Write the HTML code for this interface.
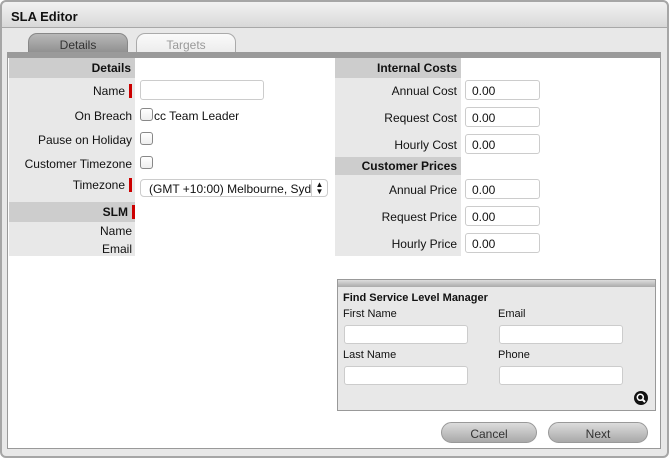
<!DOCTYPE html>
<html><head><style>
*{margin:0;padding:0;box-sizing:border-box}
body{width:669px;height:458px;background:#fff;font-family:"Liberation Sans",Arial,sans-serif;font-size:12px;color:#111;position:relative;overflow:hidden}
.win{position:absolute;left:0;top:0;width:669px;height:458px;border:2px solid #a6a6a6;border-radius:6px;background:#e8e8e8}
.title{position:absolute;left:0;top:0;right:0;height:26px;background:linear-gradient(#f2f2f2,#d8d8d8);border-bottom:1px solid #a8a8a8;border-radius:5px 5px 0 0;font-weight:bold;font-size:13px;padding:7px 0 0 9px}
.tab{position:absolute;top:33px;height:20px;border-radius:9px 9px 0 0;text-align:center;font-size:12px;padding-top:4px}
.content{position:absolute;left:7px;top:52px;width:654px;height:397px;background:#fff;border:1px solid #999;border-top:6px solid #9a9a9a}
.abs{position:absolute}
.lab{position:absolute;text-align:right;font-size:12px}
.col{position:absolute;background:#e8e8e8}
.hdr{position:absolute;background:#cdcdcd;font-weight:bold;text-align:right;padding-right:4px}
.req{display:inline-block;width:3px;height:14px;background:#c00;vertical-align:-3px;margin-left:4px}
.inp{position:absolute;background:#fff;border:1px solid #ccc;border-radius:3px;height:20px;font-size:12px;padding:3px 0 0 6px}
.cb{position:absolute;width:13px;height:13px;border:1px solid #888;border-radius:3px;background:linear-gradient(#fff,#eee)}
.btn{position:absolute;top:422px;height:21px;border-radius:11px;background:linear-gradient(#dcdcdc,#a9a9a9);border:1px solid #999;text-align:center;padding-top:4px;color:#333}
</style></head><body>
<div class="win">
<div class="title">SLA Editor</div>
</div>
<div class="tab" style="left:28px;width:100px;background:linear-gradient(#b8b8b8,#8f8f8f);color:#333;border:1px solid #888;border-bottom:none">Details</div>
<div class="tab" style="left:136px;width:100px;background:linear-gradient(#fafafa,#ececec);color:#999;border:1px solid #aaa;border-bottom:none">Targets</div>
<div class="content">
 <div class="col" style="left:1px;top:0;width:126px;height:198px"></div>
 <div class="hdr" style="left:1px;top:0;width:126px;height:20px;padding-top:3px">Details</div>
 <div class="lab" style="left:0;top:26px;width:124px">Name<span class="req"></span></div>
 <div class="inp" style="left:132px;top:22px;width:124px"></div>
 <div class="lab" style="left:0;top:51px;width:124px">On Breach</div>
 <div class="cb" style="left:132px;top:50px"></div>
 <div class="abs" style="left:146px;top:51px">cc Team Leader</div>
 <div class="lab" style="left:0;top:75px;width:124px">Pause on Holiday</div>
 <div class="cb" style="left:132px;top:74px"></div>
 <div class="lab" style="left:0;top:99px;width:124px">Customer Timezone</div>
 <div class="cb" style="left:132px;top:98px"></div>
 <div class="lab" style="left:0;top:120px;width:124px">Timezone<span class="req"></span></div>
 <div class="inp" style="left:132px;top:121px;width:188px;height:18px;border-radius:4px;padding:2px 0 0 8px;font-size:12px;white-space:nowrap;overflow:hidden">(GMT +10:00) Melbourne, Syd<span style="position:absolute;right:0;top:0;width:16px;height:16px;border-left:1px solid #ccc;font-size:8px;line-height:7px;text-align:center;padding-top:1px">▲<br>▼</span></div>
 <div class="hdr" style="left:1px;top:144px;width:126px;height:20px;padding-top:3px;padding-right:0">SLM<span class="req"></span></div>
 <div class="lab" style="left:0;top:166px;width:124px">Name</div>
 <div class="lab" style="left:0;top:184px;width:124px">Email</div>

 <div class="col" style="left:327px;top:0;width:126px;height:198px"></div>
 <div class="hdr" style="left:327px;top:0;width:126px;height:20px;padding-top:3px">Internal Costs</div>
 <div class="lab" style="left:327px;top:26px;width:122px">Annual Cost</div>
 <div class="inp" style="left:457px;top:22px;width:75px">0.00</div>
 <div class="lab" style="left:327px;top:53px;width:122px">Request Cost</div>
 <div class="inp" style="left:457px;top:49px;width:75px">0.00</div>
 <div class="lab" style="left:327px;top:80px;width:122px">Hourly Cost</div>
 <div class="inp" style="left:457px;top:76px;width:75px">0.00</div>
 <div class="hdr" style="left:327px;top:99px;width:126px;height:18px;padding-top:2px">Customer Prices</div>
 <div class="lab" style="left:327px;top:125px;width:122px">Annual Price</div>
 <div class="inp" style="left:457px;top:121px;width:75px">0.00</div>
 <div class="lab" style="left:327px;top:152px;width:122px">Request Price</div>
 <div class="inp" style="left:457px;top:148px;width:75px">0.00</div>
 <div class="lab" style="left:327px;top:179px;width:122px">Hourly Price</div>
 <div class="inp" style="left:457px;top:175px;width:75px">0.00</div>

 <div class="abs" style="left:329px;top:221px;width:319px;height:132px;background:#e8e8e8;border:1px solid #999">
  <div style="height:7px;background:linear-gradient(#ddd,#aaa)"></div>
  <div class="abs" style="left:5px;top:12px;font-weight:bold;font-size:11px">Find Service Level Manager</div>
  <div class="abs" style="left:5px;top:28px;font-size:11px">First Name</div>
  <div class="abs" style="left:160px;top:28px;font-size:11px">Email</div>
  <div class="inp" style="left:6px;top:45px;width:124px;height:19px"></div>
  <div class="inp" style="left:161px;top:45px;width:124px;height:19px"></div>
  <div class="abs" style="left:5px;top:69px;font-size:11px">Last Name</div>
  <div class="abs" style="left:160px;top:69px;font-size:11px">Phone</div>
  <div class="inp" style="left:6px;top:86px;width:124px;height:19px"></div>
  <div class="inp" style="left:161px;top:86px;width:124px;height:19px"></div>
  <svg class="abs" style="left:296px;top:111px" width="14" height="14" viewBox="0 0 14 14"><circle cx="7" cy="7" r="7" fill="#111"/><circle cx="6.3" cy="6.3" r="3" fill="none" stroke="#fff" stroke-width="1.5"/><path d="M8.5 8.5L11 11" stroke="#fff" stroke-width="2"/></svg>
 </div>
</div>
<div class="btn" style="left:441px;width:96px">Cancel</div>
<div class="btn" style="left:548px;width:100px">Next</div>
</body></html>
